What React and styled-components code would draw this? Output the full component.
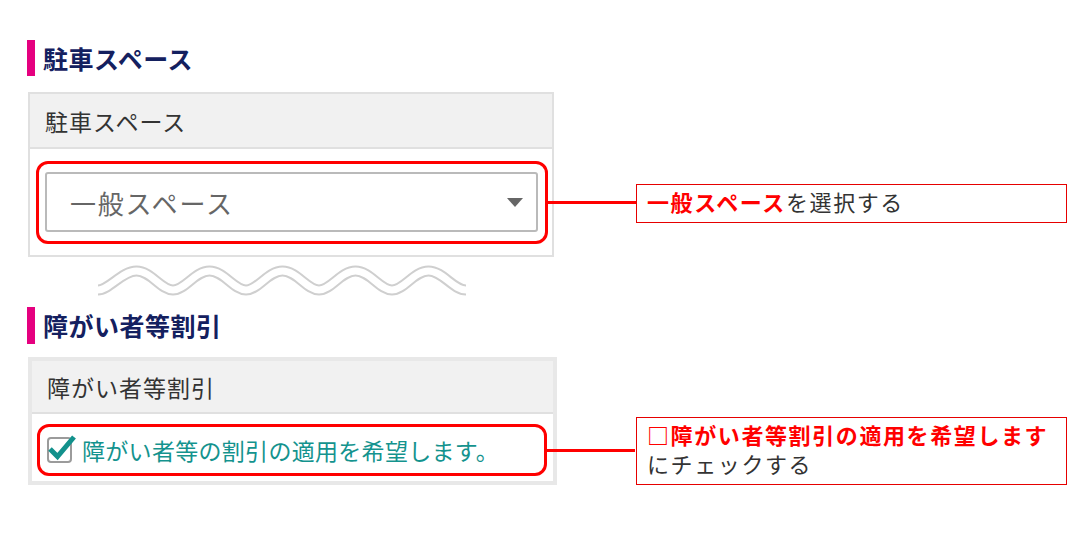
import React from "react";
import styled, { createGlobalStyle } from "styled-components";

const GlobalStyle = createGlobalStyle`
  body {
    margin: 0;
    background: #fff;
    font-family: "Noto Sans CJK JP", "Noto Sans", sans-serif;
  }
`;

const WAVE_PATH =
  "M1 27 C12 27 25 8 39.5 8 S64 27 76 27 S98 8 112.5 8 S137 27 149 27 S171 8 185.5 8 S210 27 222 27 S244 8 258.5 8 S283 27 295 27 S317 8 331.5 8 S356 27 369 27";

const App = () => {
  return (
    <>
      <GlobalStyle />
      <Page>
        <Heading $height={36} $gap={16}>
          駐車スペース
        </Heading>
        <Row>
          <Card $width={526} $border="2px solid #e0e0e0">
            <CardHeader $height={53}>駐車スペース</CardHeader>
            <CardBody $padding="12px 4px 11px 6px">
              <Highlight $padding="8px 7px 9px 6px">
                <Select>
                  <span>一般スペース</span>
                  <Caret />
                </Select>
              </Highlight>
            </CardBody>
          </Card>
          <Callout $offset={34}>
            <Strong>一般スペース</Strong>を選択する
          </Callout>
        </Row>

        <Wave width="370" height="36" viewBox="0 0 370 36">
          <path d={WAVE_PATH} fill="none" stroke="#cfcfcf" strokeWidth="11" />
          <path d={WAVE_PATH} fill="none" stroke="#fff" strokeWidth="7" />
        </Wave>

        <Heading $height={37} $gap={13}>
          障がい者等割引
        </Heading>
        <Row>
          <Card $width={529} $border="4px solid #e8e8e8">
            <CardHeader $height={51}>障がい者等割引</CardHeader>
            <CardBody $padding="10px 6px 5px 5px">
              <Highlight $padding="0 6px">
                <CheckRow>
                  <svg width="30" height="30" viewBox="0 0 30 30">
                    <rect
                      x="2"
                      y="4"
                      width="23"
                      height="24"
                      rx="3"
                      fill="#fff"
                      stroke="#9b9b9b"
                      strokeWidth="2"
                    />
                    <path
                      d="M4 15 L11.5 22.5 L28 3"
                      fill="none"
                      stroke="#12918c"
                      strokeWidth="5"
                    />
                  </svg>
                  <CheckLabel>障がい者等の割引の適用を希望します。</CheckLabel>
                </CheckRow>
              </Highlight>
            </CardBody>
          </Card>
          <Callout $offset={0}>
            <Strong>□障がい者等割引の適用を希望します</Strong>
            <br />
            にチェックする
          </Callout>
        </Row>
      </Page>
    </>
  );
};

export default App;

// Styled Components
const Page = styled.div`
  display: flex;
  flex-direction: column;
  align-items: flex-start;
  padding: 40px 0 0 28px;
`;

const Heading = styled.h2`
  margin: 0 0 ${({ $gap }) => $gap}px -1px;
  height: ${({ $height }) => $height}px;
  line-height: ${({ $height }) => $height}px;
  border-left: 8px solid #e5007f;
  padding-left: 8px;
  font-size: 25px;
  font-weight: 700;
  letter-spacing: 0.5px;
  color: #14205f;
`;

const Row = styled.div`
  display: grid;
  grid-template-columns: 608px 431px;
  align-items: end;
`;

const Card = styled.div`
  width: ${({ $width }) => $width}px;
  box-sizing: border-box;
  border: ${({ $border }) => $border};
  background: #fff;
`;

const CardHeader = styled.div`
  height: ${({ $height }) => $height}px;
  display: flex;
  align-items: center;
  padding-left: 15px;
  background: #f1f1f1;
  border-bottom: 2px solid #e0e0e0;
  font-size: 23px;
  letter-spacing: 1px;
  color: #333;
`;

const CardBody = styled.div`
  padding: ${({ $padding }) => $padding};
`;

const Highlight = styled.div`
  position: relative;
  border: 3px solid #ff0000;
  border-radius: 12px;
  padding: ${({ $padding }) => $padding};

  &::after {
    content: "";
    position: absolute;
    left: calc(100% + 3px);
    top: calc(50% - 1.5px);
    width: 88px;
    height: 3px;
    background: #ff0000;
  }
`;

const Select = styled.div`
  height: 60px;
  box-sizing: border-box;
  display: flex;
  align-items: center;
  justify-content: space-between;
  padding: 0 13px 0 23px;
  border: 2px solid #bababa;
  border-radius: 3px;
  background: #fff;
  font-size: 26px;
  letter-spacing: 1.8px;
  color: #666;
`;

const Caret = styled.span`
  width: 0;
  height: 0;
  border-left: 8px solid transparent;
  border-right: 8px solid transparent;
  border-top: 9px solid #666;
`;

const CheckRow = styled.div`
  height: 46px;
  display: flex;
  align-items: center;
  gap: 6px;

  svg {
    flex: none;
    margin-top: -3px;
  }
`;

const CheckLabel = styled.span`
  font-size: 23px;
  letter-spacing: 0.3px;
  color: #14938e;
`;

const Callout = styled.div`
  margin-bottom: ${({ $offset }) => $offset}px;
  box-sizing: border-box;
  border: 1px solid #e60000;
  padding: 2px 10px 6px;
  font-size: 22px;
  line-height: 29px;
  letter-spacing: 1.6px;
  color: #333;
  background: #fff;
`;

const Strong = styled.span`
  font-weight: 700;
  color: #ff0000;
`;

const Wave = styled.svg`
  display: block;
  margin: 6px 0 8px 69px;
`;
